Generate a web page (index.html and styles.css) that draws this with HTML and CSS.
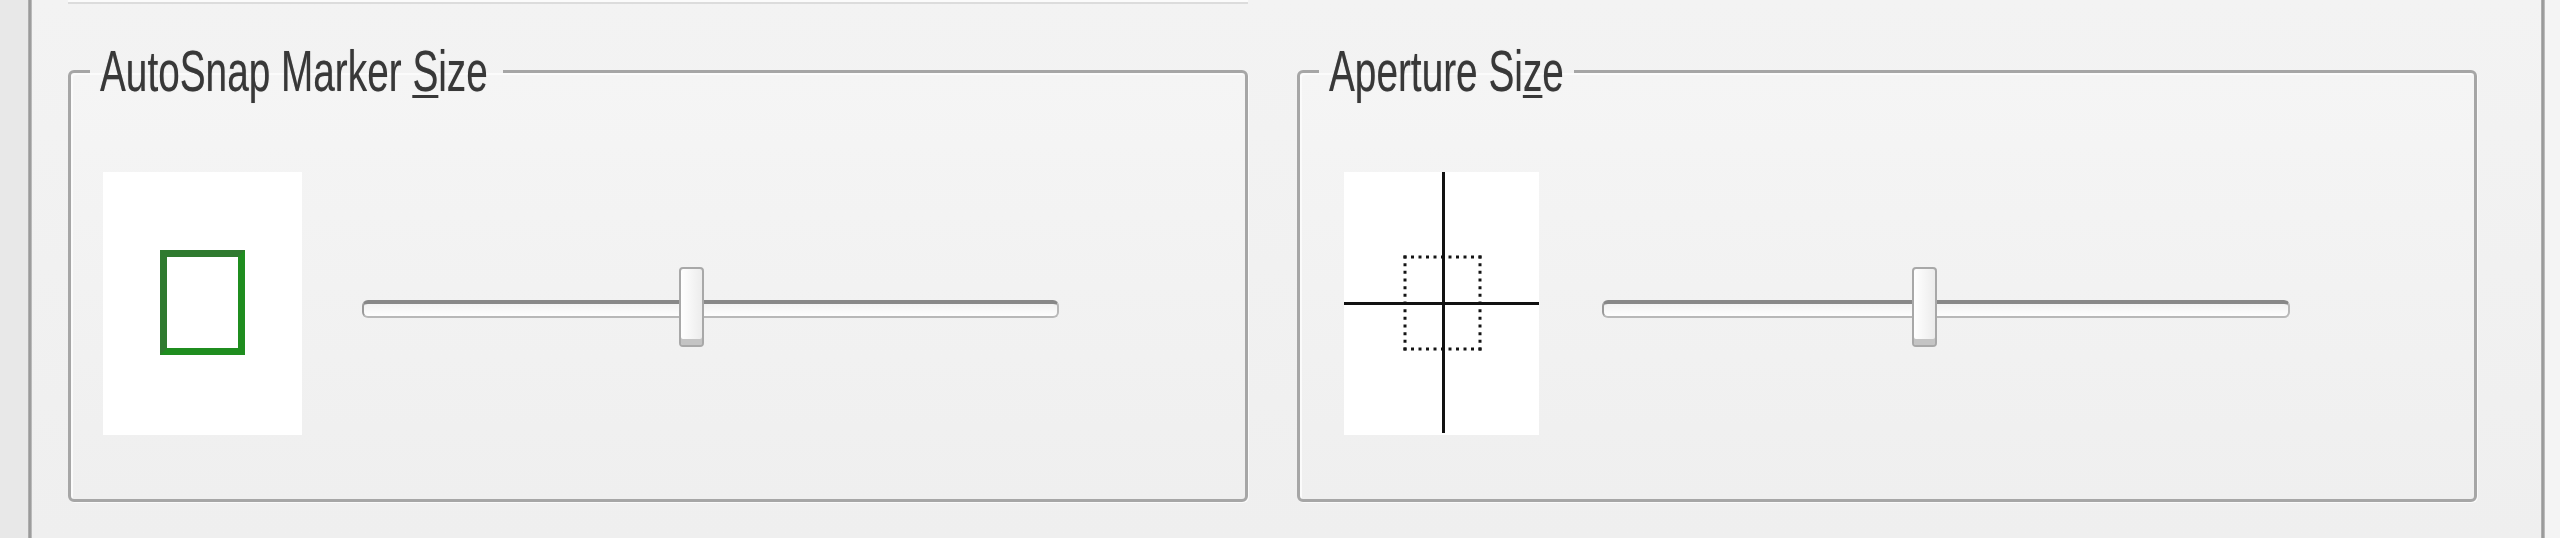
FILE: index.html
```html
<!DOCTYPE html>
<html lang="en">
<head>
<meta charset="utf-8">
<title>Drafting</title>
<link rel="stylesheet" href="styles.css">
</head>
<body>
<div class="edge-left"></div>
<div class="edge-line"></div>
<main class="panel">
  <fieldset class="group">
    <legend class="legend"><span class="legend-box legend-snap"><span class="legend-text">AutoSnap Marker <u>S</u>ize</span></span></legend>
    <div class="group-body body-snap">
      <div class="preview preview-snap">
        <div class="marker"></div>
      </div>
      <div class="slider slider-snap">
        <div class="track"></div>
        <div class="thumb" style="left: 45.5%"></div>
      </div>
    </div>
  </fieldset>
  <fieldset class="group">
    <legend class="legend"><span class="legend-box legend-aperture"><span class="legend-text">Aperture Si<u>z</u>e</span></span></legend>
    <div class="group-body body-aperture">
      <div class="preview preview-aperture">
        <svg class="aperture-icon" width="195" height="263" viewBox="0 0 195 263">
          <g class="dots" stroke="#141414" stroke-width="3" fill="none">
            <line x1="59.5" y1="85" x2="137.5" y2="85" stroke-dasharray="3 4.5"/>
            <line x1="59.5" y1="177" x2="137.5" y2="177" stroke-dasharray="3 4.5"/>
            <line x1="61" y1="83.5" x2="61" y2="178.5" stroke-dasharray="3 4.667"/>
            <line x1="136" y1="83.5" x2="136" y2="178.5" stroke-dasharray="3 4.667"/>
          </g>
          <g stroke="#111" stroke-width="3">
            <line x1="99.5" y1="0" x2="99.5" y2="261"/>
            <line x1="0" y1="131.5" x2="196" y2="131.5"/>
          </g>
        </svg>
      </div>
      <div class="slider slider-aperture">
        <div class="track"></div>
        <div class="thumb" style="left: 45%"></div>
      </div>
    </div>
  </fieldset>
</main>
<div class="edge-line"></div>
<div class="edge-right"></div>
</body>
</html>
```
FILE: styles.css
```css
html, body {
  margin: 0;
  padding: 0;
}
body {
  width: 2560px;
  height: 538px;
  overflow: hidden;
  display: flex;
  background: #f0f0f0;
  font-family: "Liberation Sans", Arial, sans-serif;
}
.edge-left {
  width: 28px;
  background: #e8e8e8;
}
.edge-line {
  width: 4px;
  background: linear-gradient(to right, #b8b8b8, #8f8f8f 50%, #c9c9c9);
}
.edge-right {
  width: 15px;
  background: #f4f4f4;
}
.panel {
  flex: 1;
  display: flex;
  align-items: flex-start;
  gap: 49px;
  padding: 43px 64px 0 36px;
  background:
    linear-gradient(#fbfbfb, #fbfbfb) 36px 0 / 1180px 2px no-repeat,
    linear-gradient(#dcdcdc, #dcdcdc) 36px 2px / 1180px 2px no-repeat,
    linear-gradient(#f3f3f3, #efefef);
}
.group {
  flex: 1;
  min-width: 0;
  margin: 0;
  padding: 0;
  border: 3px solid #a6a6a6;
  border-radius: 6px;
  box-shadow: inset 2px 2px 0 #fbfbfb, 1px 1px 0 #fafafa;
  background: linear-gradient(#f5f5f5, #efefef);
}
.legend {
  margin-left: 19px;
  padding: 0 13px 0 10px;
  font-size: 57px;
  line-height: 57px;
  color: #383838;
}
.legend-box {
  display: inline-block;
  vertical-align: top;
  height: 57px;
  white-space: nowrap;
}
.legend-snap { width: 390px; }
.legend-aperture { width: 232px; }
.legend-text {
  display: inline-block;
  transform: scaleX(0.68);
  transform-origin: left center;
  text-shadow: 0 0 1px rgba(0, 0, 0, 0.35);
}
.legend-text u {
  text-decoration-thickness: 3px;
  text-underline-offset: 4px;
}
.group-body {
  display: flex;
  align-items: flex-start;
  padding-top: 72px;
  padding-bottom: 64px;
}
.body-snap { padding-left: 32px; padding-right: 186px; }
.body-aperture { padding-left: 44px; padding-right: 184px; }
.preview {
  height: 263px;
  background: #ffffff;
  display: flex;
  align-items: center;
  justify-content: center;
  flex: none;
}
.preview-snap { width: 199px; }
.preview-aperture { width: 195px; }
.marker {
  width: 85px;
  height: 105px;
  box-sizing: border-box;
  border: 7px solid #1f8d1f;
  border-top-color: #2f7a2f;
  border-left-color: #2f7a2f;
  margin-top: -2px;
}
.aperture-icon {
  display: block;
}
.slider {
  flex: 1;
  position: relative;
  height: 80px;
  margin-top: 95px;
  display: flex;
  align-items: center;
}
.slider-snap { margin-left: 60px; }
.slider-aperture { margin-left: 63px; }
.track {
  width: 100%;
  height: 18px;
  margin-top: 4px;
  box-sizing: border-box;
  border: 2px solid #b8b8b8;
  border-top: 4px solid #888888;
  border-left-color: #9a9a9a;
  border-radius: 6px;
  background: linear-gradient(#f2f2f2, #fdfdfd);
}
.thumb {
  position: absolute;
  top: 0;
  width: 25px;
  height: 80px;
  box-sizing: border-box;
  border: 2px solid #a8a8a8;
  border-radius: 4px;
  background: linear-gradient(to right, #ffffff, #ececec);
  box-shadow: inset 0 -6px 0 #c4c4c4;
}
```
